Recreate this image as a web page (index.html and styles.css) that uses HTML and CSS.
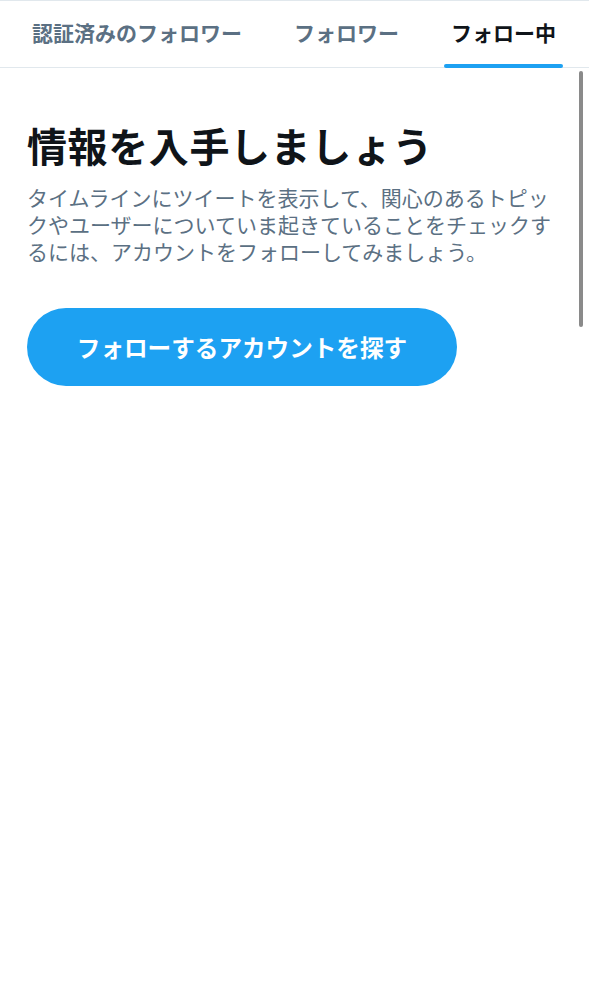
FILE: index.html
```html
<!DOCTYPE html>
<html lang="ja">
<head>
  <meta charset="UTF-8">
  <title>フォロー中</title>
  <meta name="viewport" content="width=device-width, initial-scale=1.0">
  <link rel="stylesheet" href="styles.css">
</head>
<body>
  <nav class="tabs">
    <a href="#" class="tab">認証済みのフォロワー</a>
    <a href="#" class="tab">フォロワー</a>
    <a href="#" class="tab active">フォロー中</a>
  </nav>

  <main class="empty-state">
    <h1>情報を入手しましょう</h1>
    <p>タイムラインにツイートを表示して、関心のあるトピックやユーザーについていま起きていることをチェックするには、アカウントをフォローしてみましょう。</p>
    <button class="find-btn">フォローするアカウントを探す</button>
  </main>

  <div class="scrollbar"></div>
</body>
</html>
```

FILE: styles.css
```css
* {
  margin: 0;
  padding: 0;
  box-sizing: border-box;
}

:root {
  --text-primary: #0f1419;
  --text-secondary: #5b7083;
  --accent: #1da1f2;
  --border: #e1e8ed;
}

body {
  font-family: "Noto Sans CJK JP", "Noto Sans", sans-serif;
  background: #ffffff;
  color: var(--text-primary);
  min-height: 100vh;
  position: relative;
}

/* Tabs */
.tabs {
  display: flex;
  height: 68px;
  padding-left: 6px;
  border-top: 1px solid var(--border);
  border-bottom: 1px solid var(--border);
}

.tab {
  position: relative;
  display: flex;
  align-items: center;
  padding: 0 26px 4px;
  font-size: 21px;
  font-weight: 700;
  color: var(--text-secondary);
  text-decoration: none;
  white-space: nowrap;
}

.tab.active {
  color: var(--text-primary);
}

.tab.active::after {
  content: '';
  position: absolute;
  left: 19px;
  right: 19px;
  bottom: -1px;
  height: 4px;
  border-radius: 2px;
  background: var(--accent);
}

/* Empty state */
.empty-state {
  padding: 50px 27px 0;
}

.empty-state h1 {
  font-size: 40px;
  font-weight: 700;
  line-height: 54px;
  letter-spacing: 0.6px;
  color: var(--text-primary);
}

.empty-state p {
  margin-top: 12px;
  font-size: 21px;
  line-height: 27px;
  color: var(--text-secondary);
}

.find-btn {
  margin-top: 43px;
  width: 430px;
  height: 78px;
  border: none;
  border-radius: 39px;
  background: var(--accent);
  color: #ffffff;
  font-family: inherit;
  font-size: 23.6px;
  font-weight: 700;
  cursor: pointer;
}

.scrollbar {
  position: absolute;
  top: 71px;
  right: 6px;
  width: 4px;
  height: 256px;
  border-radius: 2px;
  background: #8a8a8a;
}
```
